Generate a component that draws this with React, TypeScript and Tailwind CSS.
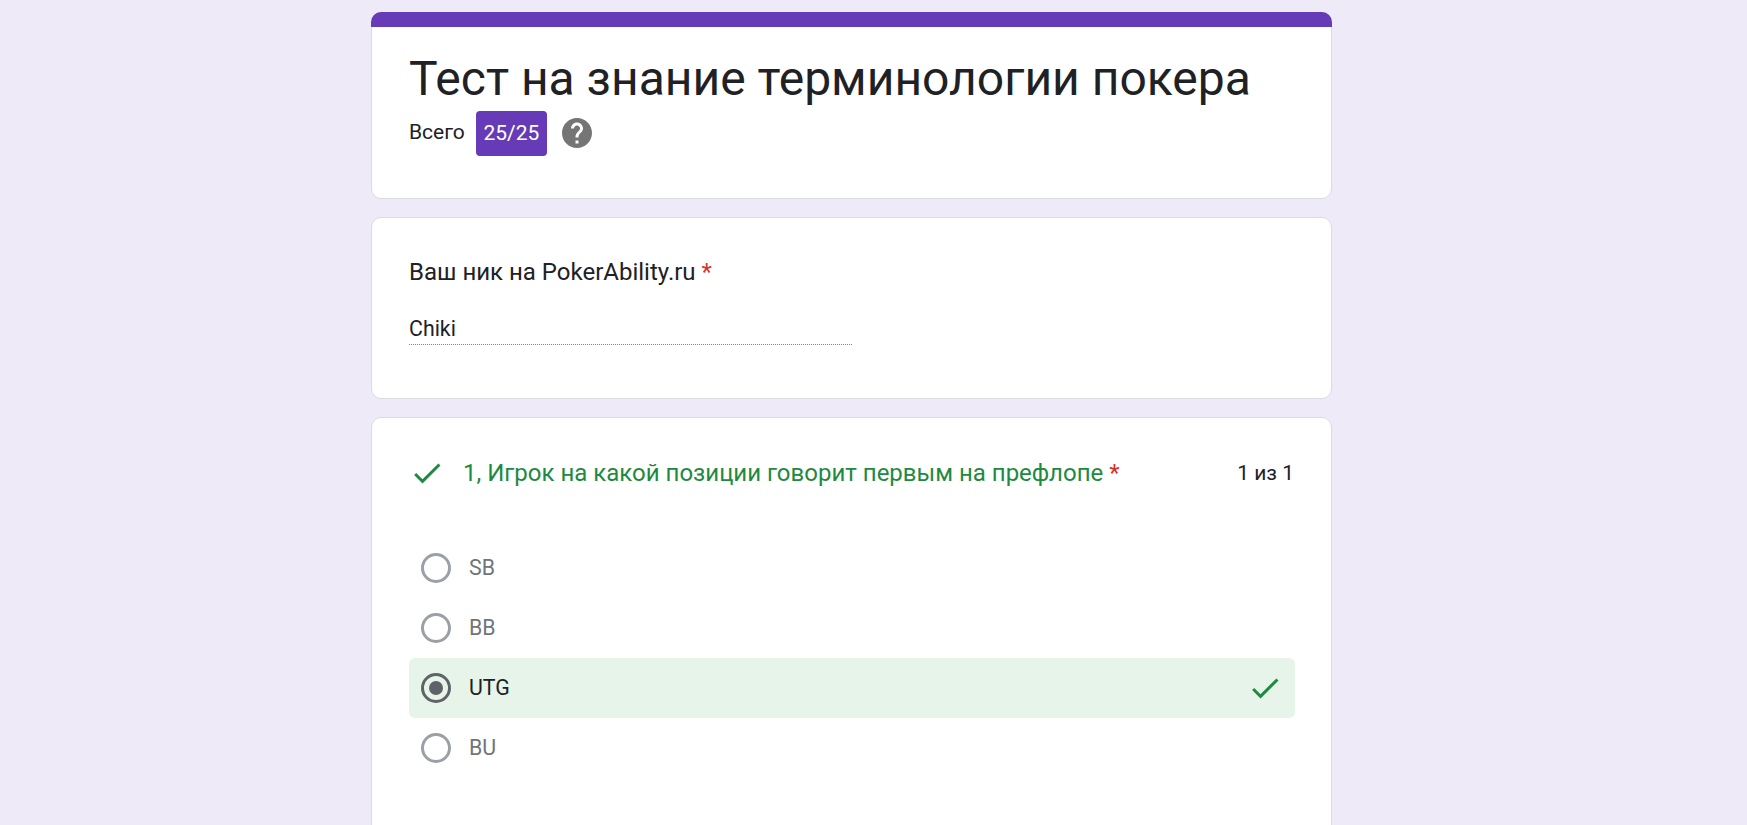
const options = ["SB", "BB", "UTG", "BU"];

const GreenCheck = ({ className }: { className: string }) => (
  <svg viewBox="0 0 24 24" className={className} fill="#1e8a40">
    <path d="M9 16.17L4.83 12l-1.42 1.41L9 19 21 7l-1.41-1.41z" />
  </svg>
);

const Radio = ({ checked }: { checked: boolean }) => (
  <div
    className={`flex h-[30px] w-[30px] shrink-0 items-center justify-center rounded-full border-[3px] ${
      checked ? "border-[#5f6368]" : "border-[#9aa0a6]"
    }`}
  >
    {checked && <div className="h-[14px] w-[14px] rounded-full bg-[#5f6368]" />}
  </div>
);

const App = () => {
  return (
    <div className="h-[825px] overflow-hidden bg-[#eeeaf8] pt-3 pl-[371px] font-['Roboto',sans-serif] text-[#202124]">
      <div className="flex w-[961px] flex-col gap-[18px]">
        <div className="h-[187px] rounded-[10px] border border-[#dadce0] bg-white">
          <div className="-mx-px -mt-px h-[15px] rounded-t-[10px] bg-[#673ab7]" />
          <div className="pt-[22px] pl-[37px]">
            <h1 className="text-[48px] leading-[60px]">Тест на знание терминологии покера</h1>
            <div className="mt-[1px] flex items-center">
              <span className="text-[21px]">Всего</span>
              <span className="mt-px ml-[11px] flex h-[45px] w-[71px] items-center justify-center rounded-[4px] bg-[#673ab7] text-[21px] text-white">
                25/25
              </span>
              <svg viewBox="0 0 24 24" className="ml-3 h-9 w-9" fill="#757575">
                <path d="M12 2C6.48 2 2 6.48 2 12s4.48 10 10 10 10-4.48 10-10S17.52 2 12 2zm1 17h-2v-2h2v2zm2.07-7.75l-.9.92C13.45 12.9 13 13.5 13 15h-2v-.5c0-1.1.45-2.1 1.17-2.83l1.24-1.26c.37-.36.59-.86.59-1.41 0-1.1-.9-2-2-2s-2 .9-2 2H8c0-2.21 1.79-4 4-4s4 1.79 4 4c0 .88-.36 1.68-.93 2.25z" />
              </svg>
            </div>
          </div>
        </div>

        <div className="h-[182px] rounded-[10px] border border-[#dadce0] bg-white pt-[40px] pl-[37px]">
          <div className="text-[24px] leading-7">
            Ваш ник на PokerAbility.ru <span className="text-[#d93025]">*</span>
          </div>
          <div className="mt-[28px] w-[443px] border-b border-dotted border-[#80868b] text-[21.33px] leading-[30px]">
            Chiki
          </div>
        </div>

        <div className="h-[500px] rounded-[10px] border border-[#dadce0] bg-white pt-[37px] pr-[37px] pl-[37px]">
          <div className="flex items-center justify-between">
            <div className="flex items-center text-[24px] leading-7 text-[#1e8a40]">
              <GreenCheck className="mr-[18px] h-9 w-9" />
              <span>
                1, Игрок на какой позиции говорит первым на префлопе{" "}
                <span className="text-[#d93025]">*</span>
              </span>
            </div>
            <span className="mt-[2px] text-[21px]">1 из 1</span>
          </div>
          <div className="mt-[47px] -mr-px flex flex-col">
            {options.map((opt) => {
              const correct = opt === "UTG";
              return (
                <div
                  key={opt}
                  className={`flex h-[60px] items-center rounded-md pl-3 ${correct ? "bg-[#e6f4ea]" : ""}`}
                >
                  <Radio checked={correct} />
                  <span className={`ml-[18px] flex-1 text-[21.33px] ${correct ? "text-[#202124]" : "text-[#70757a]"}`}>
                    {opt}
                  </span>
                  {correct && <GreenCheck className="mr-3 h-9 w-9" />}
                </div>
              );
            })}
          </div>
        </div>
      </div>
    </div>
  );
};

export default App;
